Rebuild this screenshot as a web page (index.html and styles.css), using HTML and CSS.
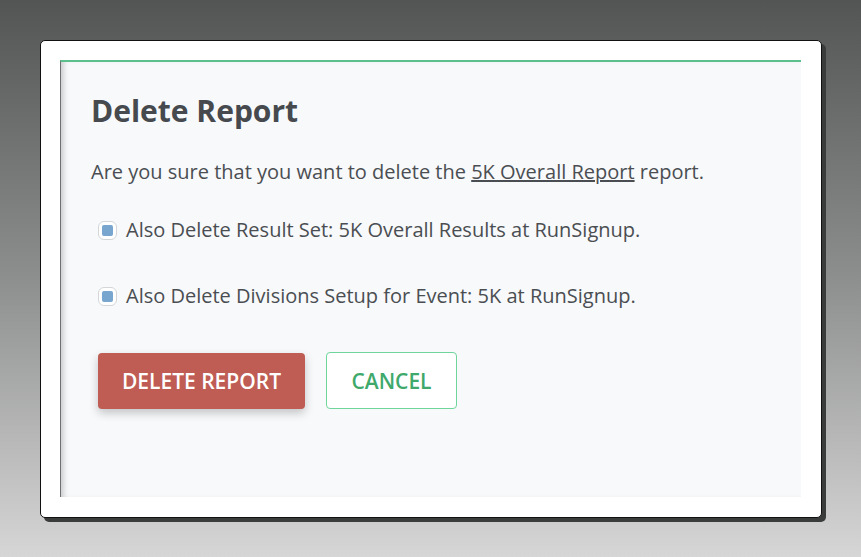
FILE: index.html
```html
<!DOCTYPE html>
<html>
<head>
<meta charset="utf-8">
<link rel="stylesheet" href="styles.css">
</head>
<body>
<div class="window">
  <div class="panel">
    <h1 class="title">Delete Report</h1>
    <p class="message">Are you sure that you want to delete the <a class="link" href="#">5K Overall Report</a> report.</p>
    <label class="check-row"><span class="check"><span class="check-mark"></span></span>Also Delete Result Set: 5K Overall Results at RunSignup.</label>
    <label class="check-row"><span class="check"><span class="check-mark"></span></span>Also Delete Divisions Setup for Event: 5K at RunSignup.</label>
    <div class="actions">
      <button class="btn btn-delete">DELETE REPORT</button>
      <button class="btn btn-cancel">CANCEL</button>
    </div>
  </div>
</div>
</body>
</html>
```
FILE: styles.css
```css
html, body {
  margin: 0;
  height: 100%;
}
body {
  background: linear-gradient(#535554 0%, #8d8e8e 50%, #d6d6d6 100%);
  font-family: "Open Sans", "Noto Sans", sans-serif;
  color: #4a4e52;
  padding: 40px 0 0 40px;
  box-sizing: border-box;
}
.window {
  width: 782px;
  height: 478px;
  box-sizing: border-box;
  background: #fff;
  border: 1px solid #111;
  border-radius: 5px;
  box-shadow: 4px 4px 0 #3a3b3b;
  padding: 19px 20px 20px 19px;
}
.panel {
  height: 100%;
  box-sizing: border-box;
  background: #f8f9fb;
  border-top: 2px solid #5cbf8c;
  border-left: 1px solid #6f7070;
  box-shadow: inset 6px 0 6px -4px rgba(0,0,0,0.22);
  padding: 30px 30px 0 30px;
}
.title {
  margin: 0;
  font-size: 30px;
  font-weight: 700;
  line-height: 38px;
  color: #464a4e;
}
.message {
  margin: 28px 0 0 0;
  font-size: 20px;
  line-height: 28px;
}
.link {
  color: #4a4e52;
  text-decoration: underline;
}
.check-row {
  display: flex;
  align-items: center;
  gap: 9px;
  font-size: 20px;
  line-height: 28px;
  margin: 30px 0 0 7px;
}
.check-row + .check-row {
  margin-top: 38px;
}
.check {
  width: 19px;
  height: 19px;
  box-sizing: border-box;
  border: 1px solid #d4d6d9;
  border-radius: 6px;
  background: #fff;
  display: flex;
  align-items: center;
  justify-content: center;
}
.check-mark {
  width: 11px;
  height: 11px;
  background: #78a6cf;
  border-radius: 2px;
}
.actions {
  display: flex;
  gap: 21px;
  margin: 42px 0 0 7px;
  align-items: center;
}
.btn {
  font-family: inherit;
  font-size: 21px;
  font-weight: 600;
  border-radius: 4px;
  cursor: pointer;
}
.btn-delete {
  width: 207px;
  height: 56px;
  background: #bf5c54;
  color: #fff;
  border: none;
  box-shadow: 0 4px 10px rgba(0,0,0,0.22);
}
.btn-cancel {
  width: 131px;
  height: 57px;
  background: #fff;
  color: #3fa96b;
  border: 1px solid #6fd59b;
}
```
